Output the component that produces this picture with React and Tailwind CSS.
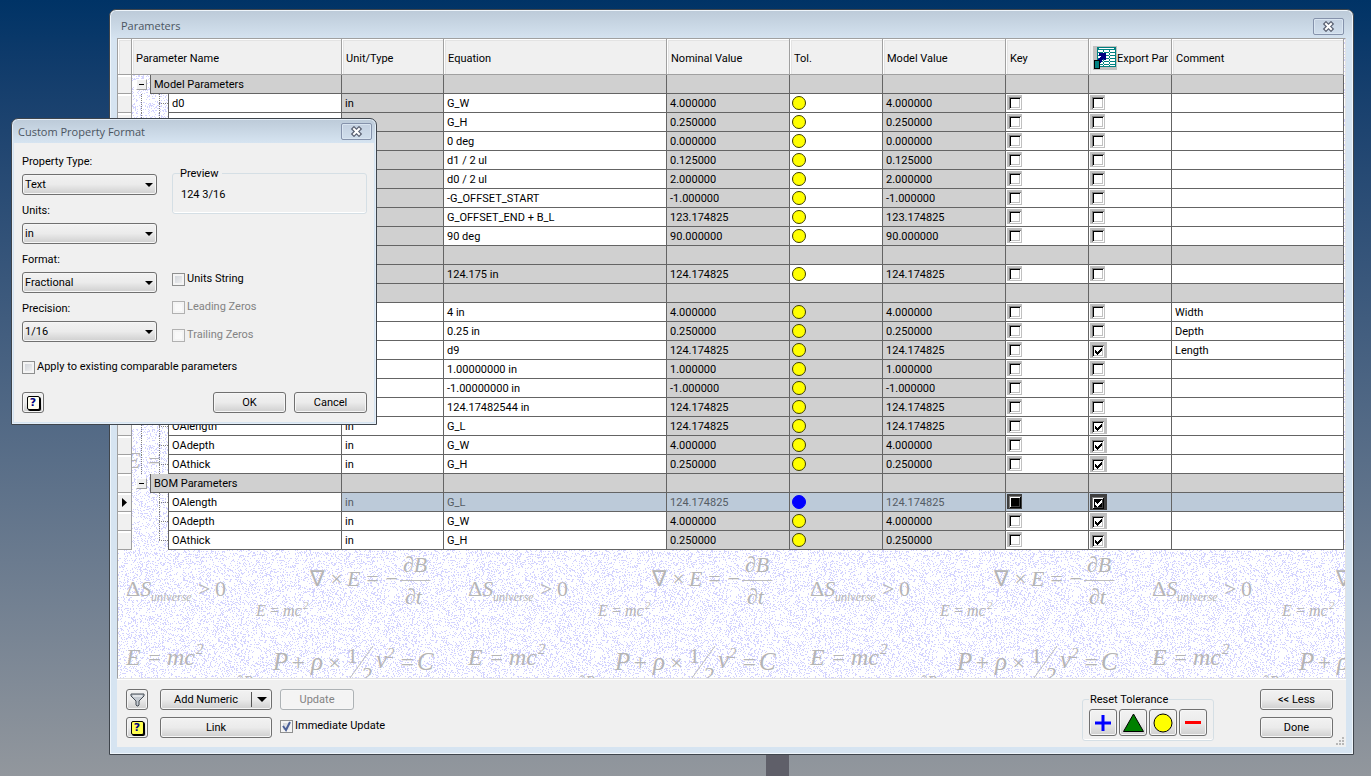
import React, { useState } from "react";

const MODEL = [
    ["d0", "in", "G_W", "4.000000"],
    ["d1", "in", "G_H", "0.250000"],
    ["d2", "deg", "0 deg", "0.000000"],
    ["d3", "in", "d1 / 2 ul", "0.125000"],
    ["d4", "in", "d0 / 2 ul", "2.000000"],
    ["d5", "in", "-G_OFFSET_START", "-1.000000"],
    ["d6", "in", "G_OFFSET_END + B_L", "123.174825"],
    ["d7", "deg", "90 deg", "90.000000"],
];
const REFERENCE = [["d9", "in", "124.175 in", "124.174825"]];
const USER = [
    ["G_W", "in", "4 in", "4.000000", false, "Width"],
    ["G_H", "in", "0.25 in", "0.250000", false, "Depth"],
    ["G_L", "in", "d9", "124.174825", true, "Length"],
    ["B_L", "in", "1.00000000 in", "1.000000"],
    ["G_OFFSET_START", "in", "-1.00000000 in", "-1.000000"],
    ["G_OFFSET_END", "in", "124.17482544 in", "124.174825"],
    ["OAlength", "in", "G_L", "124.174825", true],
    ["OAdepth", "in", "G_W", "4.000000", true],
    ["OAthick", "in", "G_H", "0.250000", true],
];
const BOM = [
    ["OAlength", "in", "G_L", "124.174825", true],
    ["OAdepth", "in", "G_W", "4.000000", true],
    ["OAthick", "in", "G_H", "0.250000", true],
];

const groups = [
    { name: "Model Parameters", rows: MODEL, greyUnit: true },
    { name: "Reference Parameters", rows: REFERENCE, greyUnit: true, greyEquation: true },
    { name: "User Parameters", rows: USER, greyTol: true },
    { name: "BOM Parameters", rows: BOM, greyTol: true, last: true, selected: 0 },
];

// speckles for the paper behind the grid
const makeSpeckles = (size) => {
    let seed = 7;
    let d = "";
    for (let y = 0; y < size; y++) {
        for (let x = 0; x < size; x++) {
            seed = (seed * 1103515245 + 12345) % 2147483648;
            if (seed / 2147483648 < 0.21) d += `M${x} ${y}h1v1h-1z`;
        }
    }
    return d;
};
const speckles = makeSpeckles(171);

const Formulas = ({ x }) => (
    <g transform={`translate(${x} 0)`}>
        <text x="8" y="557" fontSize="22"><tspan fontStyle="normal">Δ</tspan>S</text>
        <text x="33" y="562" fontSize="12">universe</text>
        <text x="80" y="557" fontSize="22" fontStyle="normal">&gt;</text>
        <text x="97" y="557" fontSize="22" fontStyle="normal">0</text>
        <text x="138" y="577" fontSize="16">E</text>
        <text x="151" y="577" fontSize="16">=</text>
        <text x="165" y="577" fontSize="16">mc</text>
        <text x="185" y="570" fontSize="11">2</text>
        <text x="192" y="547" fontSize="22" fontStyle="normal">∇</text>
        <text x="211" y="547" fontSize="22">×</text>
        <text x="229" y="547" fontSize="22">E</text>
        <text x="247" y="547" fontSize="22">=</text>
        <text x="266" y="547" fontSize="22">−</text>
        <path d="M282 541.5h30" stroke="#bdbdbd" />
        <text x="285" y="533" fontSize="22">∂B</text>
        <text x="287" y="565" fontSize="22">∂t</text>
        <text x="8" y="626" fontSize="24">E</text>
        <text x="29" y="626" fontSize="22">=</text>
        <text x="49" y="626" fontSize="24">mc</text>
        <text x="78" y="615" fontSize="15">2</text>
        <text x="8" y="429" fontSize="24">E</text>
        <text x="29" y="429" fontSize="22">=</text>
        <text x="155" y="631" fontSize="25">P</text>
        <text x="172" y="631" fontSize="24">+</text>
        <text x="193" y="631" fontSize="25">ρ</text>
        <text x="209" y="631" fontSize="22">×</text>
        <text x="229" y="624" fontSize="22" fontStyle="normal">1</text>
        <path d="M232 639L255 607" stroke="#bdbdbd" />
        <text x="243" y="643" fontSize="22">2</text>
        <text x="258" y="629" fontSize="25">v</text>
        <text x="269" y="619" fontSize="15">2</text>
        <text x="281" y="631" fontSize="24">=</text>
        <text x="299" y="631" fontSize="25">C</text>
        <text x="118" y="647" fontSize="15">∂B</text>
    </g>
);

const Paper = () => (
    <svg className="absolute inset-0 h-full w-full" aria-hidden="true">
        <defs>
            <pattern id="speckles" width="171" height="171" patternUnits="userSpaceOnUse">
                <path d={speckles} fill="#d3d3ff" shapeRendering="crispEdges" />
            </pattern>
        </defs>
        <rect width="100%" height="100%" fill="#fff" />
        <rect width="100%" height="100%" fill="url(#speckles)" />
        <g fill="#b5b5b5" fontFamily="Liberation Serif, serif" fontStyle="italic">
            {[0, 342, 684, 1026].map((x) => <Formulas key={x} x={x} />)}
        </g>
    </svg>
);

const CloseButton = () => (
    <button aria-label="Close" className="flex h-[17px] w-[31px] items-center justify-center rounded-[2px] border border-[#8592ab] bg-linear-to-b from-[#c3d0e0] to-[#d0deec] shadow-[inset_0_0_0_1px_#d9e5f1]">
        <svg width="13" height="11" viewBox="0 0 13 11">
            <path d="M4 3l5 5M9 3l-5 5" stroke="#5a6172" strokeWidth="4.500" strokeLinecap="square" />
            <path d="M4 3l5 5M9 3l-5 5" stroke="#fff" strokeWidth="2" strokeLinecap="square" />
        </svg>
    </button>
);

const Button = ({ className = "", children, ...rest }) => (
    <button
        {...rest}
        className={`flex h-[21px] items-center justify-center rounded-[3px] border border-[#707070] bg-linear-to-b from-[#f2f2f2] from-0% via-[#ebebeb] via-50% to-[#cfcfcf] shadow-[inset_0_0_0_1px_#f6f6f6] disabled:border-[#adb2b5] disabled:from-[#f4f4f4] disabled:via-[#f4f4f4] disabled:to-[#f4f4f4] disabled:text-[#838383] ${className}`}
    >
        {children}
    </button>
);

const HelpIcon = ({ pale }) => (
    <span className={`flex h-[14px] w-[13px] items-center justify-center rounded-[2px] border border-black font-["DejaVu_Sans"] text-[11px] leading-3 font-bold text-[#000080] shadow-[1px_1px_0_#000] ${pale ? "bg-[#fffff0]" : "bg-[#ffff50]"}`}>
        ?
    </span>
);

const Check = ({ label, id, disabled, defaultChecked }) => (
    <div className="flex h-[18px] items-center gap-[2px]">
        <span className="grid">
            <input
                id={id}
                type="checkbox"
                disabled={disabled}
                defaultChecked={defaultChecked}
                className="peer col-start-1 row-start-1 size-[13px] appearance-none border border-[#8e8f8f] bg-linear-to-br from-[#cbcfd5] to-[#f6f6f6] shadow-[inset_0_0_0_2px_#f4f4f4] disabled:border-[#b1b1b1] disabled:from-[#f7f7f7] disabled:to-[#fbfbfb]"
            />
            <svg className="pointer-events-none invisible col-start-1 row-start-1 peer-checked:visible" width="13" height="13" viewBox="0 0 13 13">
                <path d="M3 6l3 4 4-8" fill="none" stroke="#4a5f97" strokeWidth="2" />
            </svg>
        </span>
        <label htmlFor={id} className={disabled ? "pt-px text-[#838383]" : "pt-px"}>{label}</label>
    </div>
);

const Combo = ({ label, id, options }) => (
    <div className="flex flex-col gap-[5px]">
        <label htmlFor={id} className="h-4 leading-[18px]">{label}</label>
        <div className="grid items-center">
            <select
                id={id}
                className="col-start-1 row-start-1 h-[21px] w-full appearance-none rounded-[3px] border border-[#707070] bg-linear-to-b from-[#f2f2f2] via-[#ebebeb] to-[#cfcfcf] pt-[2px] pl-[2px] shadow-[inset_0_0_0_1px_#f6f6f6]"
            >
                {options.map((o) => <option key={o}>{o}</option>)}
            </select>
            <svg className="pointer-events-none col-start-1 row-start-1 mr-1 justify-self-end" width="8" height="4" viewBox="0 0 8 4">
                <path d="M0 0h8l-4 4z" fill="#000" />
            </svg>
        </div>
    </div>
);

// classic sunken tick box used in the grid
const GridCheck = ({ label, checked, inverted }) => {
    const [on, setOn] = useState(!!checked);
    let look = "border-[#c0c0c0] bg-white shadow-[inset_1px_1px_#808080,inset_-1px_-1px_#fff,inset_2px_2px_#000,inset_-2px_-2px_#c0c0c0]";
    if (inverted) look = "border-[#3f3f3f] bg-black shadow-[inset_1px_1px_#7f7f7f,inset_-1px_-1px_#000,inset_2px_2px_#fff,inset_-2px_-2px_#3f3f3f]";
    return (
        <span className="grid w-fit">
            <input
                type="checkbox"
                aria-label={label}
                checked={on}
                onChange={(e) => setOn(e.target.checked)}
                className={`peer col-start-1 row-start-1 size-[15px] appearance-none border-t-2 border-r border-b border-l-2 checked:h-4 checked:w-[17px] checked:border-t-3 checked:border-r-3 ${look}`}
            />
            <svg className="pointer-events-none invisible col-start-1 row-start-1 peer-checked:visible" width="17" height="16" viewBox="0 0 17 16" shapeRendering="crispEdges">
                <path d="M5 8v3l2 2 5-5v-3l-5 5z" fill={inverted ? "#fff" : "#000"} />
            </svg>
        </span>
    );
};

const ExportIcon = () => (
    <svg className="shrink-0" width="24" height="24" viewBox="0 0 24 24" shapeRendering="crispEdges">
        <path d="M0 0h24v24H0z" fill="#c0c0c0" />
        <path d="M4 1h19v20H4z" fill="#008080" />
        <path d="M5 4h17v16H5z" fill="#fff" />
        <path d="M5 6.500h17M5 9.500h17M5 12.500h17M5 15.500h17M5 18.500h17" stroke="#008080" strokeDasharray="5 1" />
        <path d="M10.500 4v16M16.500 4v16" stroke="#008080" strokeDasharray="2 1" />
        <path d="M6 2.500h15" stroke="#fff" />
        <path d="M6 7h7v7h-2v-2l-4 6H4v-3l4-5H6z" fill="#000080" />
        <path d="M1 14h6v9H1z" fill="#000" />
        <path d="M2 15h4v7H2z" fill="#008080" />
    </svg>
);

const TreeLines = ({ last, lastGroup }) => (
    <svg className="block" width="36" height="19" viewBox="0 0 36 19" stroke="#808080" strokeDasharray="1 1" shapeRendering="crispEdges">
        {!lastGroup && <path d="M9.5 0v19" />}
        <path d={last && lastGroup ? "M27.5 0v9" : "M27.5 0v19"} />
        <path d="M27 9.5h9" />
    </svg>
);

const RowHeader = ({ current }) => (
    <td className="border-r border-b border-[#a0a0a0] bg-[#f0f0f0] p-0 shadow-[inset_0_2px_#fff]">
        {current && (
            <svg className="ml-1 block" width="5" height="9" viewBox="0 0 5 9" aria-label="Current row">
                <path d="M0 0l5 4.500-5 4.500z" fill="#000" />
            </svg>
        )}
    </td>
);

const line = "border-r border-b border-[#646464] py-0 pr-0 whitespace-nowrap overflow-hidden";
const grey = "bg-[#d0d0d0]";

const Group = ({ group }) => {
    const [open, setOpen] = useState(true);
    return (
        <tbody>
            <tr className="h-[19px]">
                <RowHeader />
                <td className="border-r border-[#646464] p-0">
                    <div className="flex h-[18px] items-center pl-1">
                        <button
                            aria-label={`Toggle ${group.name}`}
                            onClick={() => setOpen(!open)}
                            className="flex size-[11px] items-center justify-center border border-t-white border-r-[#a0a0a0] border-b-[#a0a0a0] border-l-white bg-[#f0f0f0]"
                        >
                            <svg width="5" height="5" viewBox="0 0 5 5">
                                <path d="M0 2h5v1h-5z" />
                                {!open && <path d="M2 0h1v5h-1z" />}
                            </svg>
                        </button>
                    </div>
                </td>
                <td colSpan={2} className={`${line} ${grey} pl-[3px]`}>{group.name}</td>
                {[1, 2, 3, 4, 5, 6, 7, 8].map((i) => <td key={i} className={`${line} ${grey}`}></td>)}
            </tr>
            {open && group.rows.map(([name, unit, equation, value, exported, comment], i) => {
                const selected = group.selected === i;
                const tone = (isGrey) => (selected ? "bg-[#bccad9] text-[#555c64]" : isGrey ? grey : "bg-white");
                return (
                    <tr key={name} className="h-[19px]">
                        <RowHeader current={selected} />
                        <td colSpan={2} className="border-r border-[#646464] p-0">
                            <TreeLines last={i === group.rows.length - 1} lastGroup={group.last} />
                        </td>
                        <td className={`${line} bg-white pl-[3px]`}>{name}</td>
                        <td className={`${line} pl-[3px] ${tone(group.greyUnit)}`}>{unit}</td>
                        <td className={`${line} pl-[3px] ${tone(group.greyEquation)}`}>{equation}</td>
                        <td className={`${line} pl-[3px] ${tone(true)}`}>{value}</td>
                        <td className={`${line} pl-[2px] ${tone(group.greyTol)}`}>
                            <svg className="block" width="14" height="14" viewBox="0 0 14 14" aria-label="Nominal">
                                <circle cx="7" cy="7" r="6.500" fill={selected ? "#0000ff" : "#ffff00"} stroke={selected ? "#0000ff" : "#3c3c00"} />
                            </svg>
                        </td>
                        <td className={`${line} pl-[3px] ${tone(true)}`}>{value}</td>
                        <td className={`${line} pl-px ${tone(false)}`}>
                            <GridCheck label={`Key ${name}`} inverted={selected} />
                        </td>
                        <td className={`${line} pl-px ${tone(false)}`}>
                            <GridCheck label={`Export ${name}`} checked={exported} inverted={selected} />
                        </td>
                        <td className={`${line} pl-[3px] ${tone(false)}`}>{comment}</td>
                    </tr>
                );
            })}
        </tbody>
    );
};

const Head = ({ children, span = 1 }) => (
    <th colSpan={span} className="overflow-hidden border-r border-b border-[#a0a0a0] bg-[#f0f0f0] pt-[3px] pr-0 pb-0 pl-1 text-left font-normal whitespace-nowrap shadow-[inset_1px_1px_#fff,inset_2px_2px_#e3e3e3]">
        {children}
    </th>
);

const ParameterTable = () => (
    <table className="relative w-full table-fixed border-separate border-spacing-0 leading-[13px]">
        <colgroup>
            <col className="w-[14px]" />
            <col className="w-[19px]" />
            <col className="w-[18px]" />
            <col className="w-[173px]" />
            <col className="w-[102px]" />
            <col className="w-[223px]" />
            <col className="w-[123px]" />
            <col className="w-[93px]" />
            <col className="w-[123px]" />
            <col className="w-[83px]" />
            <col className="w-[83px]" />
            <col />
        </colgroup>
        <thead>
            <tr className="h-9">
                <Head></Head>
                <Head span={3}>Parameter Name</Head>
                <Head>Unit/Type</Head>
                <Head>Equation</Head>
                <Head>Nominal Value</Head>
                <Head>Tol.</Head>
                <Head>Model Value</Head>
                <Head>Key</Head>
                <Head><span className="flex items-center"><ExportIcon />Export Par</span></Head>
                <Head>Comment</Head>
            </tr>
        </thead>
        {groups.map((g) => <Group key={g.name} group={g} />)}
    </table>
);

const ParametersWindow = () => (
    <section className="absolute top-[9px] right-[17px] bottom-[21px] left-[109px] flex flex-col rounded-t-[7px] border border-[#3f454c] bg-[#d6e4f1] bg-linear-to-b from-[#bccad8] from-0% to-[#d6e4f1] to-[30px] px-[7px] pb-[7px] shadow-[inset_0_0_0_1px_#eef5fb]">
        <header className="flex h-7 items-center justify-between pt-[5px] pr-[2px] pl-1">
            <h1 className="font-['Open_Sans'] text-[11px] text-[#4b5561]">Parameters</h1>
            <CloseButton />
        </header>
        <div className="relative min-h-0 flex-1 overflow-hidden border-t border-r border-b border-l border-t-[#a0a0a0] border-r-[#e3e3e3] border-b-[#e3e3e3] border-l-[#a0a0a0] pr-px">
            <Paper />
            <ParameterTable />
        </div>
        <footer className="flex h-[68px] justify-between border-t border-white bg-[#f0f0f0] pt-[9px] pr-[13px] pl-[9px]">
            <div className="flex gap-x-3">
                <div className="flex flex-col gap-[7px]">
                    <Button className="w-[22px]" aria-label="Filter">
                        <svg width="15" height="14" viewBox="0 0 15 14">
                            <path d="M1 1h13v2l-5 5v4l-1 1h-1l-1-1v-4l-5-5z" fill="#c3c9d0" stroke="#454c55" />
                            <path d="M3 3h9" stroke="#fff" />
                        </svg>
                    </Button>
                    <Button className="w-[22px]" aria-label="Help"><HelpIcon /></Button>
                </div>
                <div className="flex w-28 flex-col gap-[7px]">
                    <Button>
                        <span className="flex-1 pt-[2px]">Add Numeric</span>
                        <span className="flex h-[15px] w-5 items-center justify-center border-l border-[#555]">
                            <svg width="10" height="5" viewBox="0 0 10 5"><path d="M0 0h10l-5 5z" /></svg>
                        </span>
                    </Button>
                    <Button className="pt-[2px]">Link</Button>
                </div>
                <div className="-ml-1 flex flex-col gap-[7px]">
                    <Button className="w-[74px] pt-[2px]" disabled>Update</Button>
                    <Check id="immediate" label="Immediate Update" defaultChecked />
                </div>
            </div>
            <div className="flex gap-[46px]">
                <fieldset className="mt-[2px] flex h-[50px] w-[131px] gap-[2px] rounded-[3px] border border-[#d5dfe5] px-[6px] shadow-[inset_0_-1px_#fff]">
                    <legend className="h-4 px-px leading-[18px]">Reset Tolerance</legend>
                    <Button className="mt-[2px] h-[27px] w-7" aria-label="Upper">
                        <svg width="16" height="16"><path d="M0 8h16M8 0v16" stroke="#0000ff" strokeWidth="3" /></svg>
                    </Button>
                    <Button className="mt-[2px] h-[27px] w-7" aria-label="Median">
                        <svg width="23" height="21"><path d="M11.500 2L21.500 19.500h-20z" fill="#008000" stroke="#000" /></svg>
                    </Button>
                    <Button className="mt-[2px] h-[27px] w-7" aria-label="Nominal">
                        <svg width="20" height="20"><circle cx="10" cy="10" r="9" fill="#ffff00" stroke="#000" /></svg>
                    </Button>
                    <Button className="mt-[2px] h-[27px] w-7" aria-label="Lower">
                        <svg width="16" height="3"><path d="M0 0h16v3H0z" fill="#ff0000" /></svg>
                    </Button>
                </fieldset>
                <div className="flex flex-col gap-[7px]">
                    <Button className="w-[73px] pt-[2px]">&lt;&lt; Less</Button>
                    <Button className="w-[73px] pt-[2px]">Done</Button>
                </div>
            </div>
        </footer>
        <svg className="absolute right-[9px] bottom-[9px]" width="8" height="8" fill="#b8b8b8" aria-hidden="true">
            <path d="M6 0h2v2h-2zM3 3h2v2h-2zM6 3h2v2h-2zM0 6h2v2h-2zM3 6h2v2h-2zM6 6h2v2h-2z" />
        </svg>
    </section>
);

const FormatDialog = () => (
    <section className="absolute top-[118px] left-[11px] w-[366px] rounded-t-[7px] border border-[#3f454c] bg-[#d6e4f1] bg-linear-to-b from-[#bccad8] from-0% to-[#d6e4f1] to-[24px] px-[2px] pb-[2px] shadow-[inset_0_0_0_1px_#e4eef8]">
        <header className="flex h-6 items-center justify-between pt-px pr-[2px] pl-1">
            <h2 className="pt-px font-['Open_Sans'] text-[11px] text-[#4b5561]">Custom Property Format</h2>
            <CloseButton />
        </header>
        <div className="bg-[#f0f0f0] pt-[10px] pr-[7px] pb-[9px] pl-2">
            <div className="flex gap-[15px]">
                <div className="flex w-[135px] flex-col gap-[7px]">
                    <Combo id="type" label="Property Type:" options={["Text", "Number"]} />
                    <Combo id="units" label="Units:" options={["in", "ft", "mm"]} />
                    <Combo id="format" label="Format:" options={["Fractional", "Decimal"]} />
                    <Combo id="precision" label="Precision:" options={["1/16", "1/32", "1/64"]} />
                </div>
                <div className="flex flex-1 flex-col pt-3">
                    <fieldset className="h-[49px] rounded-[3px] border border-[#d5dfe5] px-[7px] shadow-[inset_0_-1px_#fff]">
                        <legend className="h-4 pr-1 leading-[18px]">Preview</legend>
                        <p className="pt-[5px] pl-px leading-[18px]">124 3/16</p>
                    </fieldset>
                    <div className="mt-14 flex flex-col gap-[10px]">
                        <Check id="unitsString" label="Units String" />
                        <Check id="leading" label="Leading Zeros" disabled />
                        <Check id="trailing" label="Trailing Zeros" disabled />
                    </div>
                </div>
            </div>
            <div className="mt-[14px]">
                <Check id="apply" label="Apply to existing comparable parameters" />
            </div>
            <div className="mt-4 flex items-center gap-2">
                <Button className="mr-auto w-[22px]" aria-label="Help"><HelpIcon pale /></Button>
                <Button className="w-[73px] pt-[2px]">OK</Button>
                <Button className="w-[73px] pt-[2px]">Cancel</Button>
            </div>
        </div>
    </section>
);

const App = () => {
    return (
        <main className="relative h-screen min-h-[776px] overflow-hidden bg-linear-to-b from-[#003366] to-[#92979d] font-['Roboto','Noto_Sans',sans-serif] text-[11px] text-black">
            <div className="absolute bottom-0 left-[766px] h-[22px] w-[23px] bg-[#5f5f69]"></div>
            <ParametersWindow />
            <FormatDialog />
        </main>
    );
};

export default App;
